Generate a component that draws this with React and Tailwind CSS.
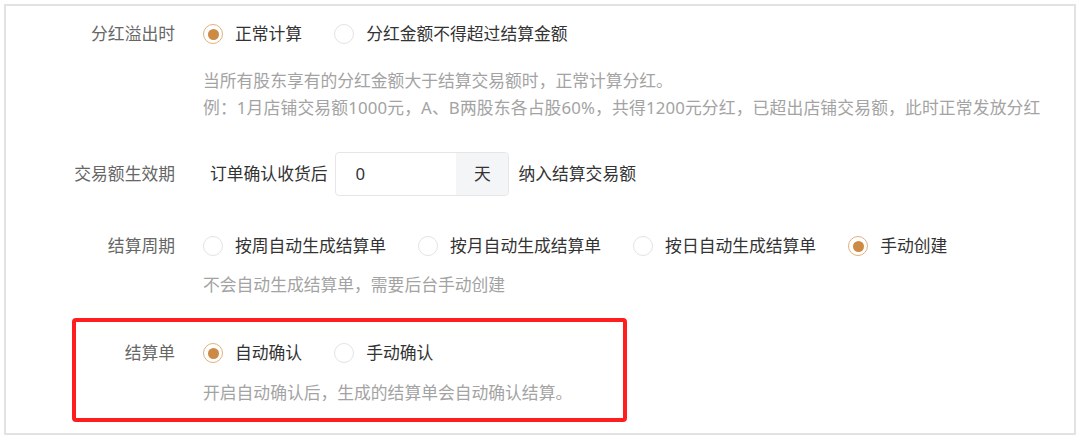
import React from "react";

function Radio({ checked, label }) {
  return (
    <div className="flex items-center mr-[32px]">
      {checked ? (
        <span className="w-[20px] h-[20px] rounded-full border border-[#e2b07c] flex items-center justify-center shrink-0">
          <span className="w-[11px] h-[11px] rounded-full bg-[#cc8a45]" />
        </span>
      ) : (
        <span className="w-[20px] h-[20px] rounded-full border border-[#e3e3e3] bg-white shrink-0" />
      )}
      <span className="ml-[12px] text-[#333]">{label}</span>
    </div>
  );
}

export default function App() {
  return (
    <div
      className="w-[1080px] h-[439px] bg-white p-[4px] text-[16.8px] leading-[24px]"
      style={{ fontFamily: '"Noto Sans", "Noto Sans CJK SC", sans-serif' }}
    >
      <div className="border-2 border-[#e2e2e2] h-[431px] pt-[16px]">
        {/* Row 1 */}
        <div className="flex">
          <div className="w-[169px] text-right text-[#666] h-[24px]">分红溢出时</div>
          <div className="ml-[28px]">
            <div className="flex items-center h-[24px]">
              <Radio checked label="正常计算" />
              <Radio label="分红金额不得超过结算金额" />
            </div>
            <div className="mt-[21px] text-[#a3a3a3] leading-[27px]">
              <div>当所有股东享有的分红金额大于结算交易额时，正常计算分红。</div>
              <div className="tracking-[0.15px]">例：1月店铺交易额1000元，A、B两股东各占股60%，共得1200元分红，已超出店铺交易额，此时正常发放分红</div>
            </div>
          </div>
        </div>

        {/* Row 2 */}
        <div className="flex items-center mt-[31px] h-[44px]">
          <div className="w-[169px] text-right text-[#666]">交易额生效期</div>
          <div className="ml-[35px] flex items-center">
            <span className="text-[#333]">订单确认收货后</span>
            <div className="ml-[8px] flex h-[44px] w-[174px] border border-[#e6e6e6] rounded-[4px] overflow-hidden">
              <div className="flex-1 flex items-center pl-[19px] text-[#333]">0</div>
              <div className="w-[52px] bg-[#f4f5f7] flex items-center justify-center text-[#333]">天</div>
            </div>
            <span className="ml-[9px] text-[#333]">纳入结算交易额</span>
          </div>
        </div>

        {/* Row 3 */}
        <div className="flex mt-[38px]">
          <div className="w-[169px] text-right text-[#666] h-[24px]">结算周期</div>
          <div className="ml-[28px]">
            <div className="flex items-center h-[24px]">
              <Radio label="按周自动生成结算单" />
              <Radio label="按月自动生成结算单" />
              <Radio label="按日自动生成结算单" />
              <Radio checked label="手动创建" />
            </div>
            <div className="mt-[13px] text-[#a3a3a3] leading-[27px]">不会自动生成结算单，需要后台手动创建</div>
          </div>
        </div>

        {/* Row 4 highlighted */}
        <div className="ml-[66px] mt-[20px] w-[555px] border-4 border-[#ff1d1d] rounded-[4px] pt-[19px] pb-[12px]">
          <div className="flex">
            <div className="w-[99px] text-right text-[#666] h-[24px]">结算单</div>
            <div className="ml-[28px]">
              <div className="flex items-center h-[24px]">
                <Radio checked label="自动确认" />
                <Radio label="手动确认" />
              </div>
              <div className="mt-[14px] text-[#a3a3a3] leading-[27px]">开启自动确认后，生成的结算单会自动确认结算。</div>
            </div>
          </div>
        </div>
      </div>
    </div>
  );
}
